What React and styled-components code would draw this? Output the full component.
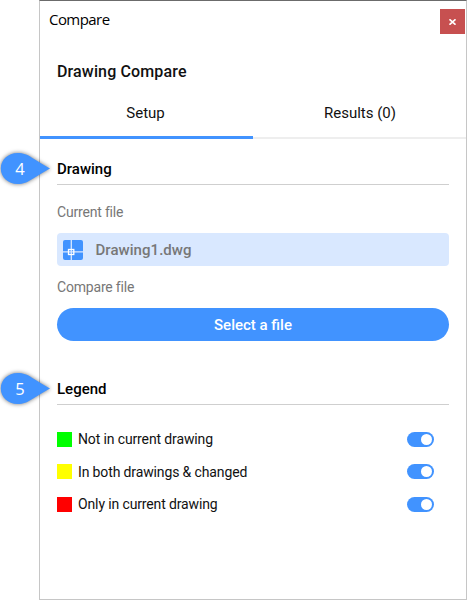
import React from 'react'
import styled, { createGlobalStyle } from 'styled-components'

const GlobalStyle = createGlobalStyle`
  * {
    box-sizing: border-box;
  }
  body {
    margin: 0;
    background: #fff;
    font-family: Roboto, "Liberation Sans", sans-serif;
    color: #111;
  }
`

const Page = styled.main`
  width: 467px;
  height: 600px;
  padding-left: 39px;
  overflow: hidden;
`

const Panel = styled.section`
  height: 600px;
  border: 1px solid #c6c6c6;
  border-top-color: #6b6b6b;
  background: #fff;
`

const TitleBar = styled.header`
  display: flex;
  justify-content: space-between;
  height: 52px;
  padding: 8px 1px 0 9px;
`

const WindowTitle = styled.span`
  font-family: "Open Sans", "Noto Sans", sans-serif;
  font-size: 15px;
  line-height: 20px;
  letter-spacing: -0.55px;
  color: #000;
`

const CloseButton = styled.button`
  display: flex;
  align-items: center;
  justify-content: center;
  width: 25px;
  height: 25px;
  padding: 0;
  border: 0;
  background: #c75050;
`

const Heading = styled.h1`
  height: 37px;
  margin: 0;
  padding-left: 17px;
  font-size: 16px;
  font-weight: 500;
  line-height: 38px;
  letter-spacing: 0.14px;
`

const Tabs = styled.nav`
  display: grid;
  grid-template-columns: 1fr 1fr;
  height: 49px;
  box-shadow: inset 0 -2px #eee;
`

const Tab = styled.button`
  padding: 0 ${props => (props.$active ? '2px 1px 0' : '0 1px 1px')};
  border: 0;
  border-bottom: 3px solid ${props => (props.$active ? '#4193ff' : 'transparent')};
  background: none;
  color: #111;
  font-family: inherit;
  font-size: 15px;
`

const Section = styled.section`
  padding: ${props => props.$top}px 17px 0;
`

const SectionTitle = styled.div`
  position: relative;
  height: 32px;
  border-bottom: 1px solid #cfcfcf;

  h2 {
    margin: 0;
    font-size: 15px;
    font-weight: 500;
    line-height: 32px;
    color: #000;
  }
`

const Callout = styled.div`
  position: absolute;
  top: -6px;
  left: -62px;
  width: 60px;
  height: 44px;

  svg {
    display: block;
    filter: drop-shadow(0 0 2px rgba(0, 0, 0, 0.55));
  }
  span {
    position: absolute;
    top: 11px;
    left: 15px;
    width: 20px;
    color: #fff;
    font-family: "Open Sans", sans-serif;
    font-size: 16.5px;
    line-height: 22px;
    text-align: center;
  }
`

const Label = styled.div`
  height: ${props => props.$height}px;
  font-size: 14px;
  letter-spacing: -0.19px;
  line-height: ${props => props.$line}px;
  color: #777;
`

const FileRow = styled.div`
  display: flex;
  align-items: center;
  gap: 12.5px;
  height: 33px;
  padding-left: 6px;
  border-radius: 4px;
  background: #d9e8ff;
  color: #777;
  font-size: 15px;
  font-weight: 500;
  letter-spacing: 0.05px;
`

const SelectButton = styled.button`
  display: block;
  width: 100%;
  height: 33px;
  padding: 1px 0 0;
  border: 0;
  border-radius: 17px;
  background: #4193ff;
  color: #fff;
  font-family: inherit;
  font-size: 15px;
  font-weight: 500;
`

const LegendList = styled.ul`
  display: grid;
  grid-auto-rows: 32.5px;
  margin: 18px 0 0;
  padding: 0;
  list-style: none;
`

const LegendItem = styled.li`
  display: flex;
  align-items: center;
  padding-right: 15px;
  font-size: 14px;
  letter-spacing: -0.13px;
`

const Swatch = styled.span`
  width: 15px;
  height: 15px;
  margin-right: 6px;
  background: ${props => props.$color};
`

const Toggle = styled.button`
  display: flex;
  justify-content: flex-end;
  align-items: center;
  width: 27px;
  height: 15px;
  margin-left: auto;
  padding: 0 2px;
  border: 0;
  border-radius: 8px;
  background: #4193ff;

  &::after {
    content: '';
    width: 11px;
    height: 11px;
    border-radius: 50%;
    background: #fff;
  }
`

const legend = [
  { color: '#00ff00', text: 'Not in current drawing' },
  { color: '#ffff00', text: 'In both drawings & changed' },
  { color: '#ff0000', text: 'Only in current drawing' }
]

const Marker = ({ number }) => (
  <Callout>
    <svg width="60" height="44" viewBox="0 0 60 44">
      <path
        d="M55 21.500C49 18 44 15 37 10.700C32 7.500 28.500 6 22.500 6C13 6 5.800 12.900 5.800 21.500C5.800 30.100 13 37 22.500 37C28.500 37 32 35.500 37 32.300C44 28 49 25 55 21.500Z"
        fill="#4193ff"
      />
    </svg>
    <span>{number}</span>
  </Callout>
)

const DrawingIcon = () => (
  <svg width="20" height="20" viewBox="0 0 20 20">
    <rect width="20" height="20" rx="2" fill="#4193ff" />
    <path d="M8.300 0V20M0 11.900H20" stroke="#d9e8ff" strokeWidth="1.300" />
    <rect x="5.500" y="9.500" width="5.300" height="5" fill="none" stroke="#fff" strokeWidth="1.300" />
  </svg>
)

const App = () => {
  return (
    <React.Fragment>
      <GlobalStyle />
      <Page>
        <Panel>
          <TitleBar>
            <WindowTitle>Compare</WindowTitle>
            <CloseButton aria-label="Close">
              <svg width="7" height="6" viewBox="0 0 7 6">
                <path d="M0.500 0.300L6.500 5.700M6.500 0.300L0.500 5.700" stroke="#fff" strokeWidth="1.600" />
              </svg>
            </CloseButton>
          </TitleBar>
          <Heading>Drawing Compare</Heading>
          <Tabs>
            <Tab $active>Setup</Tab>
            <Tab>Results (0)</Tab>
          </Tabs>
          <Section $top={14}>
            <SectionTitle>
              <Marker number={4} />
              <h2>Drawing</h2>
            </SectionTitle>
            <Label $height={48} $line={54}>Current file</Label>
            <FileRow>
              <DrawingIcon />
              <span>Drawing1.dwg</span>
            </FileRow>
            <Label $height={42} $line={42}>Compare file</Label>
            <SelectButton>Select a file</SelectButton>
          </Section>
          <Section $top={32}>
            <SectionTitle>
              <Marker number={5} />
              <h2>Legend</h2>
            </SectionTitle>
            <LegendList>
              {legend.map(item => (
                <LegendItem key={item.text}>
                  <Swatch $color={item.color} />
                  {item.text}
                  <Toggle aria-label={item.text} />
                </LegendItem>
              ))}
            </LegendList>
          </Section>
        </Panel>
      </Page>
    </React.Fragment>
  )
}

export default App
